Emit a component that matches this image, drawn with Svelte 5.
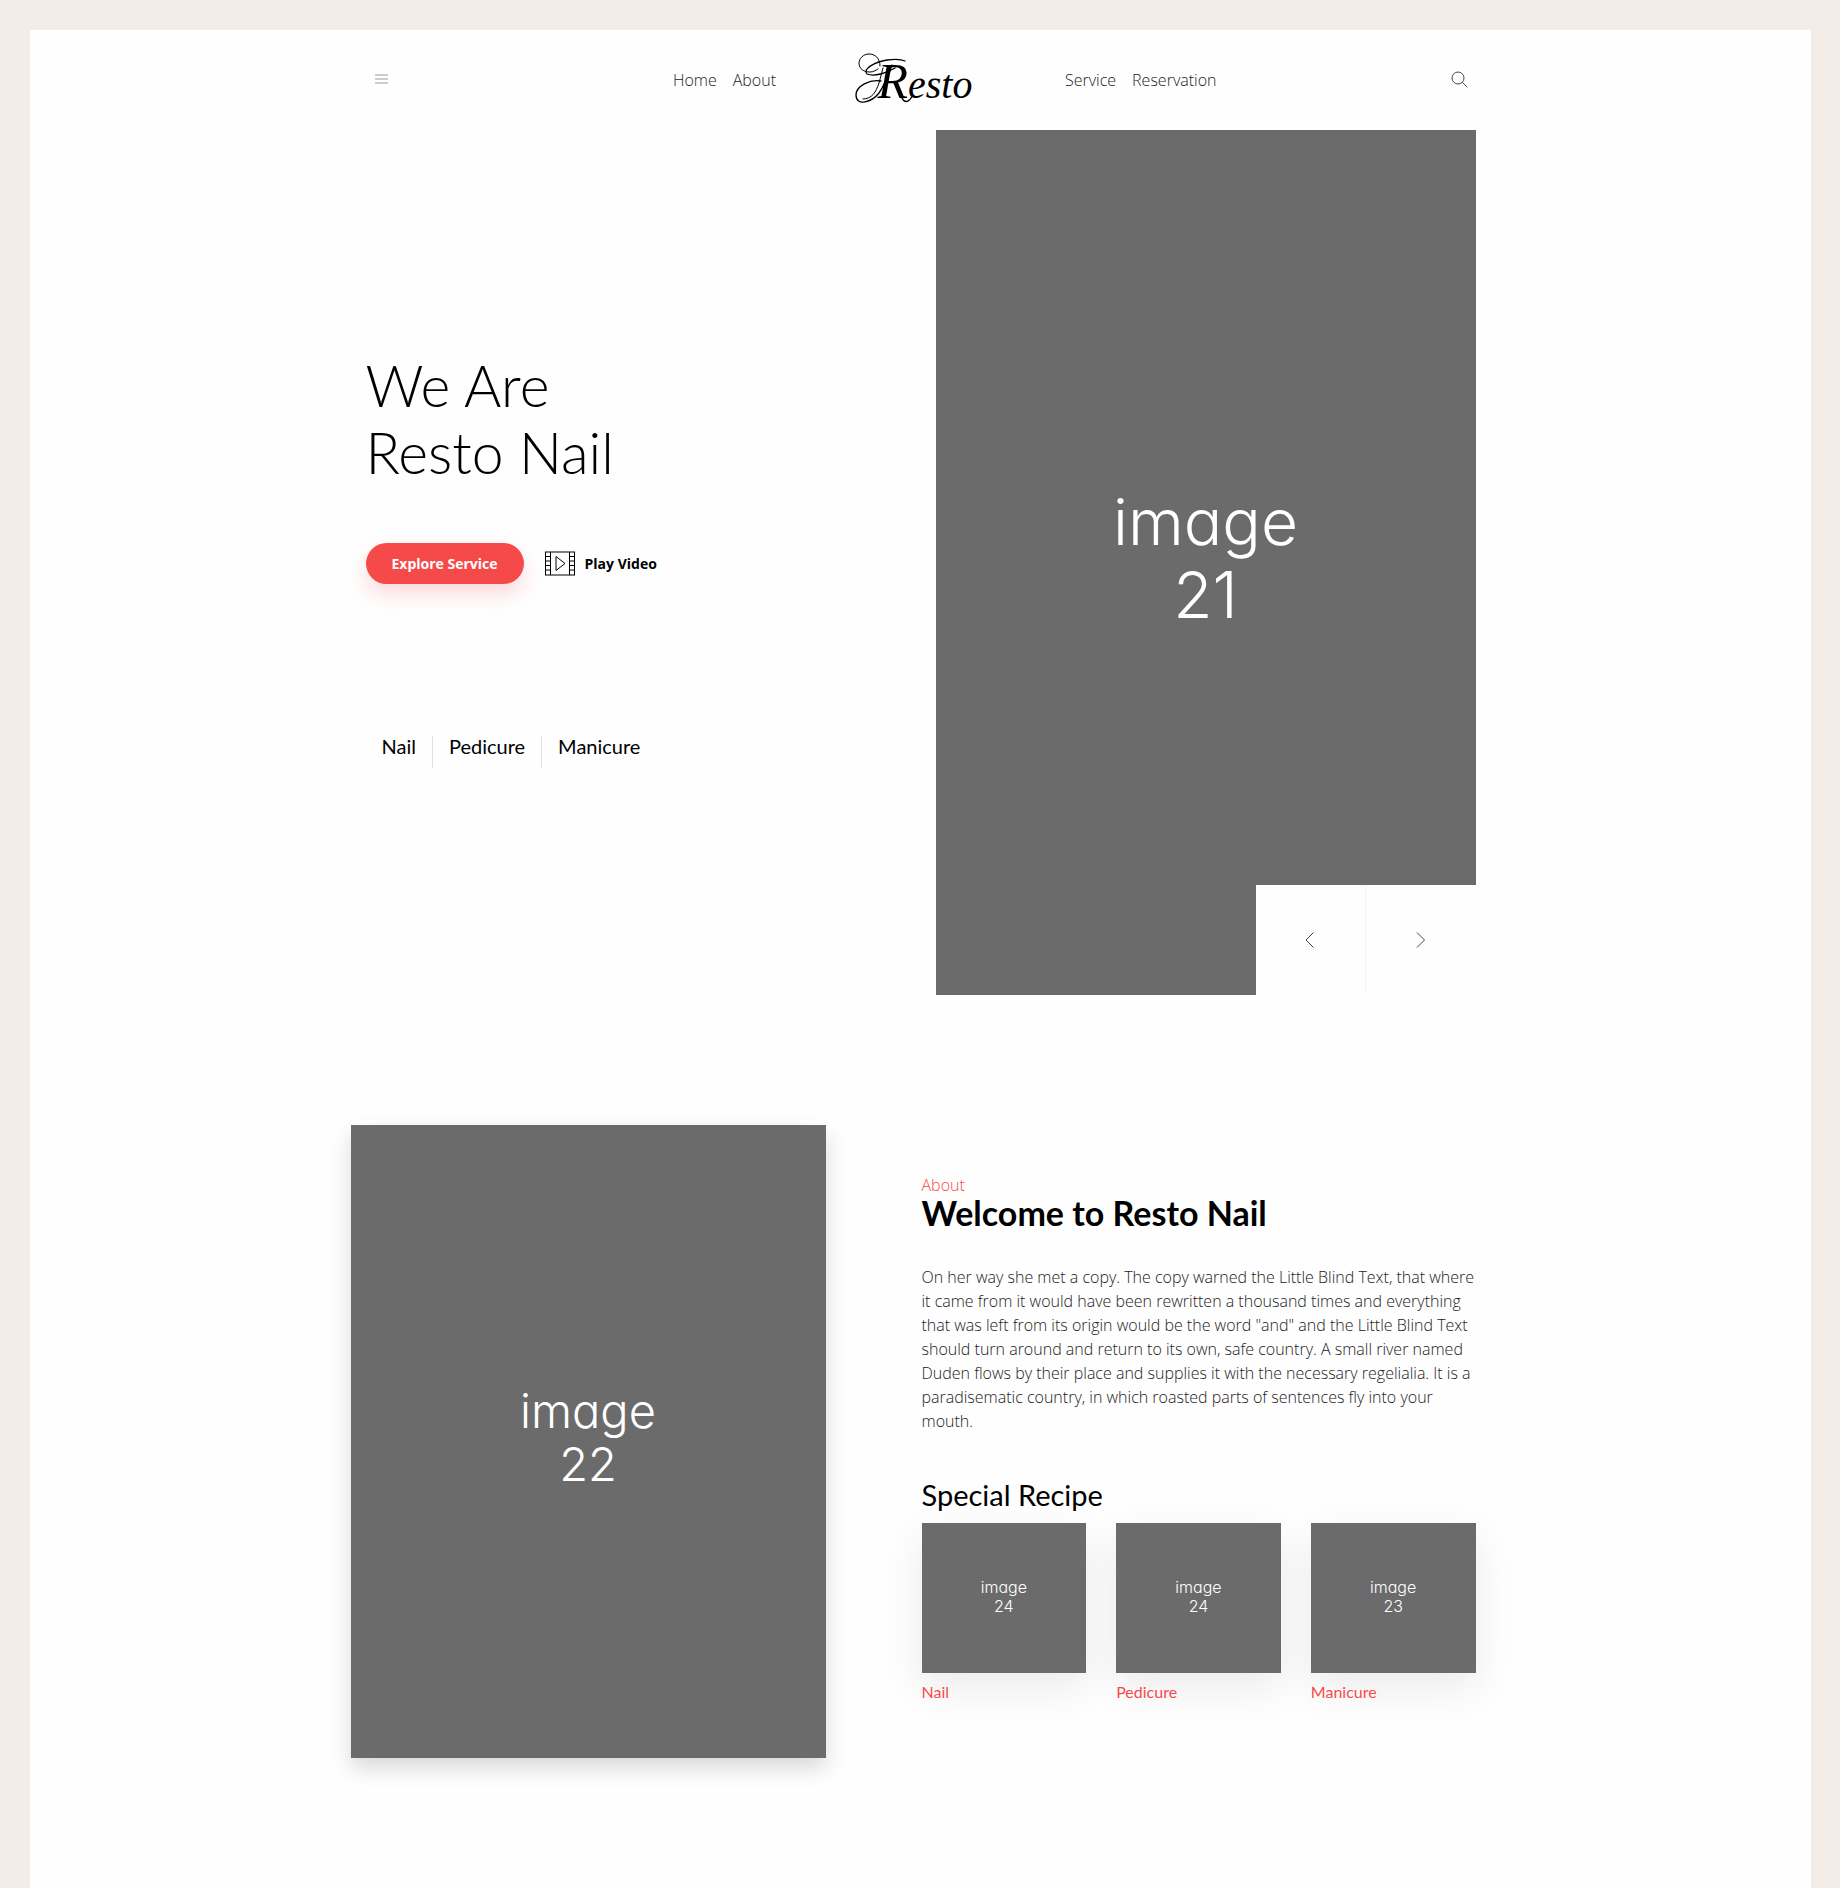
<script>
  const leftLinks = ['Home', 'About'];
  const rightLinks = ['Service', 'Reservation'];
  const services = ['Nail', 'Pedicure', 'Manicure'];
  const recipes = [
    { name: 'Nail', image: 24 },
    { name: 'Pedicure', image: 24 },
    { name: 'Manicure', image: 23 },
  ];
</script>

<div class="page">
  <header class="wrap header">
    <div class="side">
      <button class="icon-button" aria-label="Menu">
        <svg width="13" height="14" viewBox="0 0 13 14" stroke="#999" stroke-width="1" fill="none">
          <path d="M0 2h13M0 6h13M0 10h13" />
        </svg>
      </button>
      <nav class="links">
        {#each leftLinks as link}<a href="#{link.toLowerCase()}">{link}</a>{/each}
      </nav>
    </div>
    <a class="logo" href="#home">
      <svg width="120" height="58" viewBox="0 0 120 58" aria-hidden="true">
        <g fill="none" stroke="#000" stroke-linecap="round">
          <path d="M26 14C26 6 21 2 15 2C9 2 5 7 5 11C5 17 10 20 16 20C20 20 22 18 24 17" stroke-width="1" />
          <path d="M41 16C33 21 20 25 13 22C8 17 21 10 33 8C40 7 47 7 51 9" stroke-width="1.3" />
          <path d="M27 29C16 27 2 34 2 43C2 55 18 50 25 41C30 34 34 24 38 13" stroke-width="1.3" />
          <path d="M9 47C18 47 22 40 25 31L29 16" stroke-width="1" />
          <path d="M48 46C51 52 55 50 59 43" stroke-width="1.4" />
        </g>
      </svg>
      <span class="wordmark"><span class="initial">R</span>esto</span>
    </a>
    <div class="side">
      <nav class="links">
        {#each rightLinks as link}<a href="#{link.toLowerCase()}">{link}</a>{/each}
      </nav>
      <button class="icon-button" aria-label="Search">
        <svg width="17" height="19" viewBox="0 0 17 19" stroke="#444" stroke-width="1" fill="none">
          <circle cx="7" cy="7" r="6" />
          <path d="M11.3 11.3L16.3 16.3" />
        </svg>
      </button>
    </div>
  </header>

  <section class="wrap hero">
    <div class="intro">
      <h1>We Are<br />Resto Nail</h1>
      <div class="actions">
        <a class="primary" href="#service">Explore Service</a>
        <a class="play" href="#video">
          <svg width="30" height="25" viewBox="0 0 30 25" fill="none" stroke="#000">
            <rect x="0.5" y="1" width="29" height="23" />
            <path d="M5.500 1v23M24.500 1v23M0 5.500h5M0 10h5M0 14.500h5M0 19h5M25 5.500h5M25 10h5M25 14.500h5M25 19h5" />
            <path d="M11 5.500v14l9-7z" />
          </svg>
          Play Video
        </a>
      </div>
      <ul class="services">
        {#each services as service}<li>{service}</li>{/each}
      </ul>
    </div>
    <div class="slider">
      <div class="placeholder large">image<br />21</div>
      <div class="arrows">
        <button aria-label="Previous">
          <svg width="10" height="16" viewBox="0 0 10 16" fill="none" stroke="#444"><path d="M8.500 .5L1 8l7.500 7.500" /></svg>
        </button>
        <button aria-label="Next">
          <svg width="10" height="16" viewBox="0 0 10 16" fill="none" stroke="#444"><path d="M1 .5L8.500 8L1 15.500" /></svg>
        </button>
      </div>
    </div>
  </section>

  <section class="wrap about" id="about">
    <div class="placeholder medium">image<br />22</div>
    <div class="story">
      <span class="kicker">About</span>
      <h2>Welcome to Resto Nail</h2>
      <p>
        On her way she met a copy. The copy warned the Little Blind Text, that where it came from it
        would have been rewritten a thousand times and everything that was left from its origin would
        be the word "and" and the Little Blind Text should turn around and return to its own, safe
        country. A small river named Duden flows by their place and supplies it with the necessary
        regelialia. It is a paradisematic country, in which roasted parts of sentences fly into your
        mouth.
      </p>
      <h3>Special Recipe</h3>
      <div class="recipes">
        {#each recipes as recipe}
          <a class="recipe" href="#{recipe.name.toLowerCase()}">
            <div class="placeholder tiny">image<br />{recipe.image}</div>
            <span>{recipe.name}</span>
          </a>
        {/each}
      </div>
    </div>
  </section>
</div>

<style>
  :global(body) {
    background: #f4ece6;
  }
  .page {
    box-sizing: border-box;
    min-height: 100vh;
    margin: 0 29px 0 30px;
    border-top: 30px solid #f4ece6;
    padding-bottom: 130px;
    background: #fefefe;
    color: #000;
    font: 300 16px/24px 'Open Sans', sans-serif;
  }
  .wrap {
    box-sizing: border-box;
    max-width: 1140px;
    margin: 0 auto;
    padding: 0 15px;
  }
  a {
    color: inherit;
    text-decoration: none;
  }
  button {
    padding: 0;
    border: 0;
    background: none;
    cursor: pointer;
  }
  svg {
    display: block;
  }
  .header {
    display: grid;
    grid-template-columns: 1fr 289px 1fr;
    align-items: center;
    height: 100px;
  }
  .side {
    display: flex;
    justify-content: space-between;
    align-items: center;
    padding: 0 0 0 9px;
  }
  .side:last-child {
    padding: 0 8px 0 0;
  }
  .links {
    display: flex;
    gap: 16px;
    color: #222;
  }
  .logo {
    display: grid;
    justify-self: center;
    margin-right: 14px;
    padding-top: 6px;
  }
  .logo svg,
  .wordmark {
    grid-area: 1 / 1;
  }
  .wordmark {
    padding-left: 24px;
    font: italic 40px/58px 'Liberation Serif', serif;
  }
  .initial {
    font-size: 50px;
  }
  .hero {
    display: grid;
    grid-template-columns: 1fr 540px;
  }
  .intro {
    padding-top: 222px;
  }
  h1,
  h2,
  h3,
  p,
  ul {
    margin: 0;
    padding: 0;
  }
  h1,
  h2,
  h3,
  .services,
  .recipe span {
    font-family: Lato, sans-serif;
  }
  h1 {
    font-size: 57px;
    font-weight: 300;
    line-height: 67px;
  }
  .actions {
    display: flex;
    align-items: center;
    gap: 21px;
    margin-top: 57px;
    font-size: 14px;
    font-weight: 700;
  }
  .primary {
    padding: 9px 26px 8px;
    border-radius: 30px;
    background: #f64a4a;
    box-shadow: 0 10px 20px rgba(246, 74, 74, 0.2);
    color: #fff;
  }
  .play {
    display: flex;
    align-items: center;
    gap: 10px;
  }
  .services {
    display: flex;
    margin-top: 152px;
    font-size: 20px;
    font-weight: 400;
    line-height: 20px;
    list-style: none;
  }
  .services li {
    padding: 0 16px 12px;
    border-right: 1px solid #dee2e6;
  }
  .services li:last-child {
    border: 0;
  }
  .placeholder {
    box-sizing: border-box;
    display: flex;
    align-items: center;
    justify-content: center;
    padding-bottom: 10px;
    background: #6b6b6b;
    color: #fff;
    font-family: Inter, sans-serif;
    font-feature-settings: 'cv11';
    text-align: center;
  }
  .slider {
    position: relative;
  }
  .large {
    height: 865px;
    font-size: 64px;
    line-height: 73px;
  }
  .arrows {
    position: absolute;
    right: 0;
    bottom: 0;
    display: flex;
    background: #fefefe;
  }
  .arrows button {
    display: grid;
    place-items: center;
    width: 110px;
    height: 110px;
  }
  .arrows button:first-child {
    border-right: 1px solid #f5f5f5;
  }
  .about {
    display: grid;
    grid-template-columns: 475px 1fr;
    gap: 96px;
    margin-top: 130px;
    padding-left: 0;
  }
  .medium {
    height: 633px;
    font-size: 47px;
    line-height: 53px;
    box-shadow: 0 10px 20px rgba(0, 0, 0, 0.15);
  }
  .story {
    padding-top: 48px;
  }
  .kicker {
    display: block;
    color: #f64a4a;
  }
  h2 {
    margin: 0 0 36px;
    font-size: 34px;
    font-weight: 700;
    line-height: 32px;
  }
  p {
    color: #222;
  }
  h3 {
    margin-top: 42px;
    font-size: 29px;
    font-weight: 400;
    line-height: 40px;
  }
  .recipes {
    display: grid;
    grid-template-columns: repeat(3, 1fr);
    gap: 30px;
    margin-top: 8px;
  }
  .tiny {
    height: 150px;
    padding-bottom: 2px;
    font-size: 16px;
    line-height: 19px;
    box-shadow: 0 15px 40px rgba(0, 0, 0, 0.08);
  }
  .recipe span {
    display: block;
    position: relative;
    margin-top: 7px;
    color: #f64a4a;
    font-size: 16px;
    font-weight: 400;
  }
</style>
